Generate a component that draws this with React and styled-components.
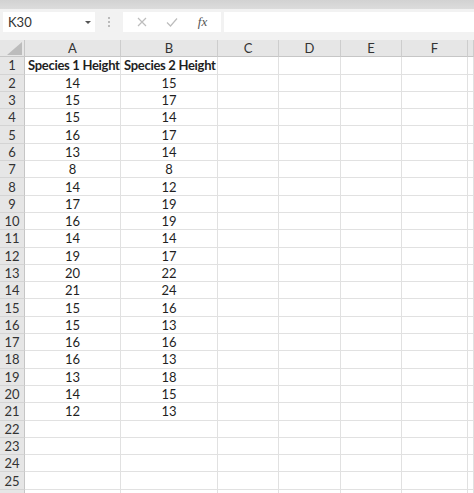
import React from 'react';
import styled, { createGlobalStyle } from 'styled-components';

const GlobalStyle = createGlobalStyle`
  html, body {
    margin: 0;
    padding: 0;
    background: #ffffff;
  }
  body {
    font-family: Lato, "Open Sans", sans-serif;
    color: #222;
  }
`;

const species1 = [14, 15, 15, 16, 13, 8, 14, 17, 16, 14, 19, 20, 21, 15, 15, 16, 16, 13, 14, 12];
const species2 = [15, 17, 14, 17, 14, 8, 12, 19, 19, 14, 17, 22, 24, 16, 13, 16, 13, 18, 15, 13];

const columns = ['A', 'B', 'C', 'D', 'E', 'F', ''];
const COLS = '25px 96px 97px 61px 62px 61px 66px 1fr';
const ROW_H = '17.3px';

const Window = styled.div`
  width: 474px;
  height: 493px;
  overflow: hidden;
  display: flex;
  flex-direction: column;
`;

const TopBand = styled.div`
  height: 9px;
  background: linear-gradient(#d2d2d2, #dcdcdc);
  flex-shrink: 0;
`;

const FormulaBar = styled.div`
  height: 31px;
  background: #f2f2f2;
  display: flex;
  align-items: flex-start;
  padding: 3px 0 0 3px;
  box-sizing: border-box;
  flex-shrink: 0;
`;

const NameBox = styled.div`
  width: 92px;
  height: 20px;
  background: #fff;
  display: flex;
  align-items: center;
  justify-content: space-between;
  padding: 0 4px 0 5px;
  box-sizing: border-box;
  font-size: 13px;
  color: #333;
`;

const Caret = styled.span`
  width: 0;
  height: 0;
  border-left: 3px solid transparent;
  border-right: 3px solid transparent;
  border-top: 3px solid #555;
`;

const Grip = styled.div`
  width: 28px;
  height: 20px;
  display: flex;
  flex-direction: column;
  align-items: center;
  justify-content: center;
  gap: 2px;

  span {
    width: 2px;
    height: 2px;
    background: #a8a8a8;
    border-radius: 1px;
  }
`;

const ButtonBox = styled.div`
  width: 98px;
  height: 20px;
  background: #fff;
  display: flex;
  align-items: center;
  justify-content: space-around;
  padding: 0 4px;
  box-sizing: border-box;
`;

const Fx = styled.span`
  font-family: "Liberation Serif", serif;
  font-style: italic;
  font-size: 13px;
  color: #555;
`;

const FormulaInput = styled.div`
  flex: 1;
  height: 20px;
  margin-left: 3px;
  background: #fff;
`;

const Sheet = styled.div`
  display: grid;
  grid-template-columns: ${COLS};
  grid-auto-rows: ${ROW_H};
  flex: 1;
`;

const ColHeader = styled.div`
  height: 17px;
  background: #e6e6e6;
  border-right: 1px solid #cdcdcd;
  border-bottom: 1px solid #c6c6c6;
  box-sizing: border-box;
  display: flex;
  align-items: center;
  justify-content: center;
  font-size: 13px;
  color: #333;
`;

const Corner = styled(ColHeader)`
  border-right: 1px solid #c6c6c6;
  align-items: flex-end;
  justify-content: flex-end;
  padding: 0 2px 1px 0;
`;

const RowHeader = styled.div`
  background: #e6e6e6;
  border-right: 1px solid #c6c6c6;
  border-bottom: 1px solid #d4d4d4;
  box-sizing: border-box;
  display: flex;
  align-items: center;
  justify-content: center;
  font-size: 13px;
  color: #333;
`;

const Cell = styled.div`
  border-right: 1px solid #e1e1e1;
  border-bottom: 1px solid #e1e1e1;
  box-sizing: border-box;
  display: flex;
  align-items: center;
  justify-content: ${(p) => (p.$bold ? 'flex-start' : 'center')};
  padding-left: ${(p) => (p.$bold ? '3px' : '0')};
  font-size: 13px;
  font-weight: ${(p) => (p.$bold ? 700 : 400)};
  letter-spacing: ${(p) => (p.$bold ? '-0.3px' : '0')};
  color: #1f1f1f;
  white-space: nowrap;
  overflow: visible;
`;

const XIcon = () => (
  <svg width="10" height="10" viewBox="0 0 10 10">
    <path d="M1 1L9 9M9 1L1 9" stroke="#bdbdbd" strokeWidth="1.2" fill="none" />
  </svg>
);

const CheckIcon = () => (
  <svg width="12" height="10" viewBox="0 0 12 10">
    <path d="M1 5.5L4.5 9L11 1.5" stroke="#bdbdbd" strokeWidth="1.2" fill="none" />
  </svg>
);

const CornerTriangle = () => (
  <svg width="15" height="13" viewBox="0 0 15 13">
    <path d="M15 0L15 13L0 13Z" fill="#bcbcbc" />
  </svg>
);

// 26 rows so the next one peeks in at the bottom edge
const rows = [];
for (let r = 1; r <= 26; r++) {
  let values = ['', '', '', '', '', '', ''];
  let bold = false;
  if (r === 1) {
    values[0] = 'Species 1 Height';
    values[1] = 'Species 2 Height';
    bold = true;
  } else if (r <= 21) {
    values[0] = species1[r - 2];
    values[1] = species2[r - 2];
  }
  rows.push({ n: r, values, bold });
}

export default function App() {
  return (
    <Window>
      <GlobalStyle />
      <TopBand />
      <FormulaBar>
        <NameBox>
          K30
          <Caret />
        </NameBox>
        <Grip>
          <span />
          <span />
          <span />
        </Grip>
        <ButtonBox>
          <XIcon />
          <CheckIcon />
          <Fx>fx</Fx>
        </ButtonBox>
        <FormulaInput />
      </FormulaBar>
      <Sheet>
        <Corner>
          <CornerTriangle />
        </Corner>
        {columns.map((c, i) => (
          <ColHeader key={i}>{c}</ColHeader>
        ))}
        {rows.map((row) => (
          <React.Fragment key={row.n}>
            <RowHeader>{row.n < 26 ? row.n : ''}</RowHeader>
            {row.values.map((v, i) => (
              <Cell key={i} $bold={row.bold && v !== ''}>
                {v}
              </Cell>
            ))}
          </React.Fragment>
        ))}
      </Sheet>
    </Window>
  );
}
